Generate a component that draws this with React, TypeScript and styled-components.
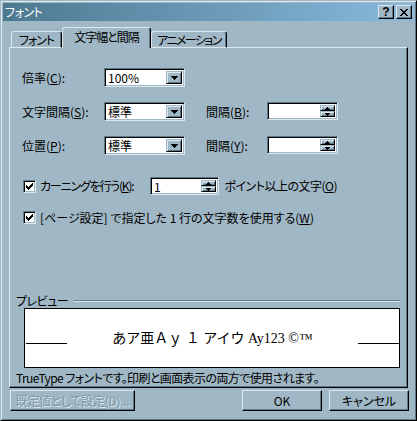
import React from "react";
import styled, { createGlobalStyle } from "styled-components";

const C = {
  face: "#a0b8c6",
  light: "#dce7ee",
  shadow: "#5e7888",
  dark: "#000000",
};

const Global = createGlobalStyle`
  html, body { margin: 0; padding: 0; background: ${C.face}; }
  body {
    font-family: "Noto Sans CJK JP", "Noto Sans", sans-serif;
    font-size: 12px;
    font-feature-settings: "palt";
    color: #000;
  }
  * { box-sizing: border-box; }
`;

const Window = styled.div`
  width: 417px;
  height: 421px;
  background: ${C.face};
  border-left: 1px solid ${C.face};
  border-top: 1px solid ${C.face};
  border-right: 1px solid ${C.dark};
  border-bottom: 1px solid ${C.dark};
  box-shadow: inset 1px 1px ${C.light}, inset -1px -1px ${C.shadow};
  padding: 2px;
  display: flex;
  flex-direction: column;
`;

const TitleBar = styled.div`
  height: 18px;
  background: linear-gradient(to right, #4d7990, #88b9dd);
  display: flex;
  align-items: center;
  padding: 0 2px 0 2px;
  color: #fff;
  font-size: 12px;
  line-height: 18px;
  letter-spacing: -0.5px;
`;

const TitleText = styled.span`
  flex: 1;
`;

const TitleButtons = styled.div`
  display: flex;
  gap: 2px;
`;

const TitleButton = styled.div`
  width: 16px;
  height: 14px;
  background: ${C.face};
  border-top: 1px solid ${C.light};
  border-left: 1px solid ${C.light};
  border-right: 1px solid ${C.dark};
  border-bottom: 1px solid ${C.dark};
  box-shadow: inset -1px -1px ${C.shadow};
  display: flex;
  align-items: center;
  justify-content: center;
  color: #000;
  font-family: "Liberation Sans", sans-serif;
  font-weight: bold;
  font-size: 12px;
  line-height: 12px;
  letter-spacing: 0;
`;

const Body = styled.div`
  display: flex;
  flex-direction: column;
  padding: 7px 5px 0 6px;
`;

const TabStrip = styled.div`
  display: flex;
  align-items: flex-end;
  height: 20px;
  padding-left: 2px;
  margin-bottom: -1px;
  position: relative;
  z-index: 1;
`;

const Tab = styled.div<{ $active?: boolean; $w: number; $ls?: number }>`
  width: ${(p) => p.$w}px;
  height: ${(p) => (p.$active ? 21 : 17)}px;
  background: ${C.face};
  border-top: 1px solid ${C.light};
  border-left: 1px solid ${C.light};
  border-right: 1px solid ${C.dark};
  border-radius: 3px 3px 0 0;
  box-shadow: inset -1px 0 ${C.shadow};
  display: flex;
  align-items: ${(p) => (p.$active ? "flex-start" : "center")};
  padding-top: ${(p) => (p.$active ? 2 : 0)}px;
  justify-content: center;
  line-height: 14px;
  white-space: nowrap;
  letter-spacing: ${(p) => p.$ls ?? -1}px;
  ${(p) => (p.$active ? "" : `border-bottom: 1px solid ${C.light};`)}
`;

const Panel = styled.div`
  width: 399px;
  height: 341px;
  background: ${C.face};
  border-top: 1px solid ${C.light};
  border-left: 1px solid ${C.light};
  border-right: 1px solid ${C.dark};
  border-bottom: 1px solid ${C.dark};
  box-shadow: inset -1px -1px ${C.shadow};
  padding: 20px 7px 0 6px;
  display: flex;
  flex-direction: column;
`;

const Row = styled.div<{ $top: number; $h: number }>`
  display: flex;
  align-items: center;
  margin-top: ${(p) => p.$top}px;
  height: ${(p) => p.$h}px;
  padding-left: 6px;
`;

const Label = styled.span<{ $w: number; $ml?: number; $ls?: number }>`
  width: ${(p) => p.$w}px;
  margin-left: ${(p) => p.$ml ?? 0}px;
  white-space: nowrap;
  line-height: 14px;
  letter-spacing: ${(p) => p.$ls ?? 0}px;
`;

const Sunken = styled.div<{ $w: number; $h: number }>`
  width: ${(p) => p.$w}px;
  height: ${(p) => p.$h}px;
  background: #fff;
  border-top: 1px solid ${C.shadow};
  border-left: 1px solid ${C.shadow};
  border-right: 1px solid ${C.light};
  border-bottom: 1px solid ${C.light};
  box-shadow: inset 1px 1px ${C.dark}, inset -1px -1px ${C.face};
  display: flex;
  align-items: stretch;
  padding: 2px;
  align-self: flex-start;
`;

const FieldText = styled.span`
  flex: 1;
  padding-left: 1px;
  line-height: 14px;
  white-space: nowrap;
`;

const RaisedBtn = styled.div<{ $w: number }>`
  width: ${(p) => p.$w}px;
  background: ${C.face};
  border-top: 1px solid ${C.face};
  border-left: 1px solid ${C.face};
  border-right: 1px solid ${C.dark};
  border-bottom: 1px solid ${C.dark};
  box-shadow: inset 1px 1px ${C.light}, inset -1px -1px ${C.shadow};
  display: flex;
  align-items: center;
  justify-content: center;
`;

const SpinStack = styled.div`
  display: flex;
  flex-direction: column;
  width: 15px;
`;

const SpinHalf = styled(RaisedBtn)`
  flex: 1;
  width: 15px;
`;

const CheckWrap = styled.div<{ $w?: number; $ls?: number }>`
  display: flex;
  align-items: center;
  gap: 4px;
  width: ${(p) => (p.$w ? `${p.$w}px` : "auto")};
  padding-left: 1px;
  white-space: nowrap;
  line-height: 14px;
  letter-spacing: ${(p) => p.$ls ?? 0}px;
`;

const CheckBox = styled.div`
  width: 13px;
  height: 13px;
  background: #fff;
  border-top: 1px solid ${C.shadow};
  border-left: 1px solid ${C.shadow};
  border-right: 1px solid ${C.light};
  border-bottom: 1px solid ${C.light};
  box-shadow: inset 1px 1px ${C.dark}, inset -1px -1px ${C.face};
  display: flex;
  align-items: center;
  justify-content: center;
  flex: none;
`;

const Group = styled.div`
  margin-top: auto;
  display: flex;
  flex-direction: column;
`;

const GroupHead = styled.div`
  display: flex;
  align-items: center;
  height: 12px;
  gap: 6px;
  line-height: 12px;
  letter-spacing: -0.5px;
`;

const Etched = styled.div`
  flex: 1;
  height: 2px;
  border-top: 1px solid ${C.shadow};
  border-bottom: 1px solid ${C.light};
`;

const PreviewBox = styled.div`
  margin: 1px 0 0 8px;
  height: 60px;
  background: #fff;
  border: 1px solid #000;
  display: flex;
  align-items: flex-start;
`;

const PreviewLine = styled.div<{ $ml?: number }>`
  width: 41px;
  height: 1px;
  background: #000;
  margin-top: 34px;
  margin-left: ${(p) => p.$ml ?? 0}px;
  flex: none;
`;

const PreviewText = styled.div`
  flex: 1;
  text-align: center;
  margin-top: 22px;
  font-family: "Liberation Serif", "Noto Sans CJK JP", serif;
  font-feature-settings: normal;
  font-size: 14px;
  line-height: 16px;
  white-space: pre;
`;

const Note = styled.div`
  margin-top: 2px;
  margin-bottom: 2px;
  line-height: 15px;
  white-space: nowrap;
  letter-spacing: -0.6px;
`;

const ButtonRow = styled.div`
  display: flex;
  margin-top: 2px;
  height: 21px;
  gap: 7px;
  padding-left: 1px;
`;

const PushButton = styled.div<{ $w: number; $disabled?: boolean }>`
  width: ${(p) => p.$w}px;
  height: 21px;
  background: ${C.face};
  border-top: 1px solid ${C.light};
  border-left: 1px solid ${C.light};
  border-right: 1px solid ${C.dark};
  border-bottom: 1px solid ${C.dark};
  box-shadow: inset -1px -1px ${C.shadow};
  display: flex;
  align-items: center;
  justify-content: center;
  line-height: 14px;
  white-space: nowrap;
  ${(p) =>
    p.$disabled
      ? `color: #7f99a9; text-shadow: 1px 1px 0 ${C.light}; letter-spacing: -0.3px;`
      : ""}
`;

const Spacer = styled.div`
  flex: 1;
`;

const DownArrow = () => (
  <svg width="7" height="4" shapeRendering="crispEdges">
    <rect x="0" y="0" width="7" height="1" fill="#000" />
    <rect x="1" y="1" width="5" height="1" fill="#000" />
    <rect x="2" y="2" width="3" height="1" fill="#000" />
    <rect x="3" y="3" width="1" height="1" fill="#000" />
  </svg>
);

const SmallArrow = ({ up }: { up?: boolean }) => (
  <svg width="5" height="3" shapeRendering="crispEdges" style={up ? { transform: "scaleY(-1)" } : undefined}>
    <rect x="0" y="0" width="5" height="1" fill="#000" />
    <rect x="1" y="1" width="3" height="1" fill="#000" />
    <rect x="2" y="2" width="1" height="1" fill="#000" />
  </svg>
);

const CheckMark = () => (
  <svg width="7" height="7" shapeRendering="crispEdges">
    {[2, 3, 4, 3, 2, 1, 0].map((y, x) => (
      <rect key={x} x={x} y={y} width="1" height="3" fill="#000" />
    ))}
  </svg>
);

const CloseGlyph = () => (
  <svg width="8" height="7" shapeRendering="crispEdges">
    <rect x="0" y="0" width="2" height="1" fill="#000" />
    <rect x="6" y="0" width="2" height="1" fill="#000" />
    <rect x="1" y="1" width="2" height="1" fill="#000" />
    <rect x="5" y="1" width="2" height="1" fill="#000" />
    <rect x="2" y="2" width="4" height="1" fill="#000" />
    <rect x="3" y="3" width="2" height="1" fill="#000" />
    <rect x="2" y="4" width="4" height="1" fill="#000" />
    <rect x="1" y="5" width="2" height="1" fill="#000" />
    <rect x="5" y="5" width="2" height="1" fill="#000" />
    <rect x="0" y="6" width="2" height="1" fill="#000" />
    <rect x="6" y="6" width="2" height="1" fill="#000" />
  </svg>
);

const Combo = ({ value }: { value: string }) => (
  <Sunken $w={81} $h={19}>
    <FieldText>{value}</FieldText>
    <RaisedBtn $w={16}>
      <DownArrow />
    </RaisedBtn>
  </Sunken>
);

const Spin = ({ value = "" }: { value?: string }) => (
  <Sunken $w={71} $h={18}>
    <FieldText>{value}</FieldText>
    <SpinStack>
      <SpinHalf $w={15}>
        <SmallArrow up />
      </SpinHalf>
      <SpinHalf $w={15}>
        <SmallArrow />
      </SpinHalf>
    </SpinStack>
  </Sunken>
);

export default function App() {
  return (
    <>
      <Global />
      <Window>
        <TitleBar>
          <TitleText>フォント</TitleText>
          <TitleButtons>
            <TitleButton>?</TitleButton>
            <TitleButton>
              <CloseGlyph />
            </TitleButton>
          </TitleButtons>
        </TitleBar>
        <Body>
          <TabStrip>
            <Tab $w={51}>フォント</Tab>
            <Tab $w={89} $active>
              文字幅と間隔
            </Tab>
            <Tab $w={76} $ls={-1.6}>
              アニメーション
            </Tab>
          </TabStrip>
          <Panel>
            <Row $top={0} $h={19}>
              <Label $w={82}>
                倍率(<u>C</u>):
              </Label>
              <Combo value="100%" />
            </Row>
            <Row $top={15} $h={19}>
              <Label $w={82}>
                文字間隔(<u>S</u>):
              </Label>
              <Combo value="標準" />
              <Label $w={61} $ml={21}>
                間隔(<u>B</u>):
              </Label>
              <Spin />
            </Row>
            <Row $top={15} $h={19}>
              <Label $w={82}>
                位置(<u>P</u>):
              </Label>
              <Combo value="標準" />
              <Label $w={61} $ml={21}>
                間隔(<u>Y</u>):
              </Label>
              <Spin />
            </Row>
            <Row $top={22} $h={18}>
              <CheckWrap $w={131}>
                <CheckBox>
                  <CheckMark />
                </CheckBox>
                <Label $w={110} $ls={-1.2}>
                  カーニングを行う(<u>K</u>):
                </Label>
              </CheckWrap>
              <Spin value="1" />
              <Label $w={180} $ml={5} $ls={-0.5}>
                ポイント以上の文字(<u>O</u>)
              </Label>
            </Row>
            <Row $top={16} $h={13}>
              <CheckWrap>
                <CheckBox>
                  <CheckMark />
                </CheckBox>
                <span>
                  [ページ設定] で指定した 1 行の文字数を使用する(<u>W</u>)
                </span>
              </CheckWrap>
            </Row>
            <Group>
              <GroupHead>
                <span>プレビュー</span>
                <Etched />
              </GroupHead>
              <PreviewBox>
                <PreviewLine $ml={1} />
                <PreviewText>{"あア亜Ａｙ １ アイウ Ay123 ©™"}</PreviewText>
                <PreviewLine />
              </PreviewBox>
            </Group>
            <Note>TrueType フォントです。印刷と画面表示の両方で使用されます。</Note>
          </Panel>
          <ButtonRow>
            <PushButton $w={125} $disabled>
              既定値として設定(D)...
            </PushButton>
            <Spacer />
            <PushButton $w={80}>OK</PushButton>
            <PushButton $w={80}>キャンセル</PushButton>
          </ButtonRow>
        </Body>
      </Window>
    </>
  );
}
